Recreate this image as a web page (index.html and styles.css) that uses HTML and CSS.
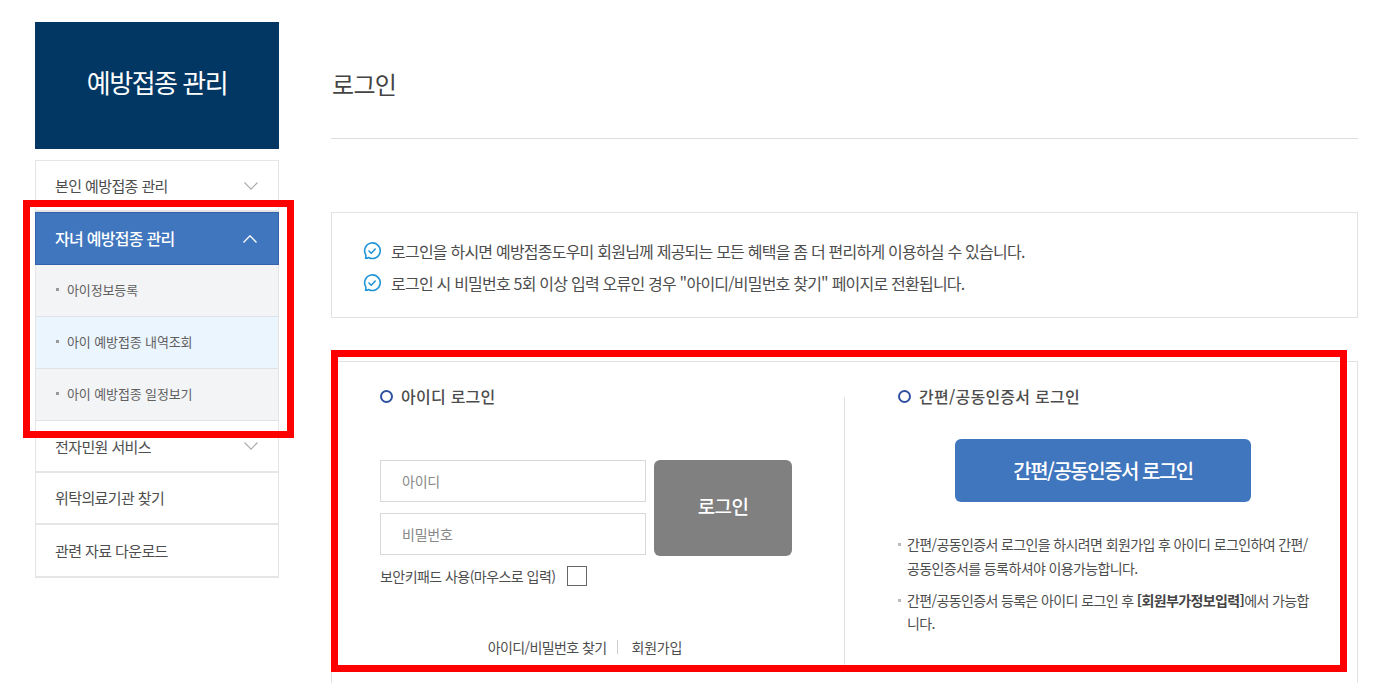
FILE: index.html
```html
<!DOCTYPE html>
<html lang="ko">
<head>
<meta charset="utf-8">
<title>로그인</title>
<link rel="stylesheet" href="styles.css">
</head>
<body>
<div class="page">
  <aside class="side">
    <div class="brand">예방접종 관리</div>
    <ul class="menu">
      <li class="item first"><span>본인 예방접종 관리</span><svg class="chev" viewBox="0 0 14 8"><path d="M.5.5 7 7.2 13.500.5"/></svg></li>
      <li class="item active"><span>자녀 예방접종 관리</span><svg class="chev" viewBox="0 0 14 8"><path d="M.5 7.500 7 .8l6.500 6.700"/></svg></li>
      <li class="sub"><i></i>아이정보등록</li>
      <li class="sub current"><i></i>아이 예방접종 내역조회</li>
      <li class="sub"><i></i>아이 예방접종 일정보기</li>
      <li class="item low"><span>전자민원 서비스</span><svg class="chev" viewBox="0 0 14 8"><path d="M.5.5 7 7.2 13.500.5"/></svg></li>
      <li class="item"><span>위탁의료기관 찾기</span></li>
      <li class="item last"><span>관련 자료 다운로드</span></li>
    </ul>
  </aside>
  <main class="main">
    <h1 class="title">로그인</h1>
    <div class="notice">
      <p><svg class="bubble" viewBox="0 0 18 18"><path d="M2.600 16.300c1.300.1 2.200-.2 3-.8A7.800 7.800 0 1 0 2.800 12.800c.2 1.300 0 2.500-.2 3.500Z"/><path d="m6 9 2.200 2.200L12.300 7"/></svg>로그인을 하시면 예방접종도우미 회원님께 제공되는 모든 혜택을 좀 더 편리하게 이용하실 수 있습니다.</p>
      <p><svg class="bubble" viewBox="0 0 18 18"><path d="M2.600 16.300c1.300.1 2.200-.2 3-.8A7.800 7.800 0 1 0 2.800 12.800c.2 1.300 0 2.500-.2 3.500Z"/><path d="m6 9 2.200 2.200L12.300 7"/></svg>로그인 시 비밀번호 5회 이상 입력 오류인 경우 "아이디/비밀번호 찾기" 페이지로 전환됩니다.</p>
    </div>
    <section class="login">
      <div class="col id">
        <h2 class="head"><i></i>아이디 로그인</h2>
        <div class="form">
          <div class="fields">
            <div class="input">아이디</div>
            <div class="input">비밀번호</div>
          </div>
          <button class="go" type="button">로그인</button>
        </div>
        <div class="keypad"><span>보안키패드 사용(마우스로 입력)</span><b class="check"></b></div>
        <div class="links"><span>아이디/비밀번호 찾기</span><i></i><span class="join">회원가입</span></div>
      </div>
      <div class="col cert">
        <h2 class="head"><i></i>간편/공동인증서 로그인</h2>
        <button class="certbtn" type="button">간편/공동인증서 로그인</button>
        <ul class="notes">
          <li>간편/공동인증서 로그인을 하시려면 회원가입 후 아이디 로그인하여 간편/공동인증서를 등록하셔야 이용가능합니다.</li>
          <li>간편/공동인증서 등록은 아이디 로그인 후 <b>[회원부가정보입력]</b>에서 가능합니다.</li>
        </ul>
      </div>
    </section>
  </main>
</div>
<div class="mark mark-menu"></div>
<div class="mark mark-login"></div>
</body>
</html>
```
FILE: styles.css
```css
* { box-sizing: border-box; margin: 0; padding: 0; }
html, body { height: 683px; overflow: hidden; background: #fff; }
body { font-family: "Noto Sans CJK KR", "Noto Sans", sans-serif; color: #4d4d4d; position: relative; }
ul { list-style: none; }
i { font-style: normal; }

.page { display: flex; padding: 22px 20px 0 35px; gap: 52px; }

.side { width: 244px; flex: none; }
.brand { height: 127px; background: #023764; color: #fff; font-size: 26px; letter-spacing: -1.5px; display: flex; align-items: center; justify-content: center; padding-bottom: 8px; }
.menu { margin-top: 11px; border: 1px solid #e5e5e5; border-bottom: 0; }
.item { height: 52px; display: flex; align-items: center; justify-content: space-between; padding: 0 20px 2px 19px; font-size: 15px; letter-spacing: -.6px; color: #4d4d4d; border-bottom: 2px solid #e5e5e5; }
.item.first { height: 51px; padding-bottom: 0; }
.item.low { padding-bottom: 0; }
.item.last { height: 53px; padding-bottom: 0; }
.item.active { height: 53px; margin: 0 -1px; padding: 0 21px 0 20px; background: #3f76bd; color: #fff; font-size: 16px; font-weight: 500; letter-spacing: -.72px; border: 1px solid #3563ab; }
.item.active span { margin: 0 0 2px -1px; }
.chev { width: 14px; height: 8px; fill: none; stroke: #aaa; stroke-width: 1.1; }
.active .chev { stroke: #fff; stroke-width: 1.3; }
.sub { height: 52px; display: flex; align-items: center; padding: 0 0 2px 20px; background: #f3f4f6; font-size: 13px; letter-spacing: -.12px; color: #5f5f5f; border-bottom: 1px solid #dfe3e8; }
.sub i { width: 3px; height: 3px; background: #999; margin-right: 8px; }
.sub.current { background: #ebf5fd; }

.main { flex: 1; min-width: 0; }
.title { height: 117px; padding-top: 44px; padding-left: 1px; font-size: 24px; line-height: 36px; font-weight: 400; letter-spacing: -.7px; color: #444; border-bottom: 1px solid #ddd; margin-bottom: 73px; }
.notice { height: 106px; border: 1px solid #e2e2e2; padding: 22px 32px 0; }
.notice p { height: 32px; display: flex; align-items: center; font-size: 16px; letter-spacing: -.78px; color: #4d4d4d; }
.bubble { width: 18px; height: 18px; margin: 0 10px 0 -1px; fill: none; stroke: #2296d6; stroke-width: 1.600; stroke-linejoin: round; stroke-linecap: round; }

.login { margin-top: 43px; height: 400px; border: 1px solid #e2e2e2; display: flex; }
.col { padding-top: 22px; position: relative; }
.col.id { width: 513px; padding-left: 48px; }
.col.id::after { content: ""; position: absolute; right: 0; top: 35px; height: 268px; width: 1px; background: #e2e2e2; }
.col.cert { flex: 1; padding-left: 53px; }
.head { height: 24px; display: flex; align-items: center; font-size: 16px; line-height: 24px; font-weight: 500; letter-spacing: .25px; color: #4d4d4d; }
.head i { width: 13px; height: 13px; border: 2.800px solid #2f519f; border-radius: 50%; margin-right: 8px; }

.form { display: flex; gap: 8px; margin-top: 52px; }
.fields { width: 266px; display: flex; flex-direction: column; gap: 11px; }
.input { height: 42px; border: 1px solid #d8d8d8; padding-left: 21px; display: flex; align-items: center; font-size: 14px; letter-spacing: -.2px; color: #888; }
.go { width: 138px; height: 96px; border: 0; border-radius: 6px; background: #808080; color: #fff; padding-bottom: 5px; font: 500 19px "Noto Sans CJK KR", sans-serif; letter-spacing: -.6px; }
.keypad { display: flex; align-items: center; margin-top: 9px; height: 22px; font-size: 14px; letter-spacing: -.55px; color: #4d4d4d; }
.check { width: 20px; height: 20px; border: 1px solid #666; margin-left: 12px; }
.links { display: flex; align-items: center; justify-content: center; margin-top: 49px; width: 410px; height: 22px; font-size: 14px; letter-spacing: -.6px; color: #4d4d4d; }
.links i { width: 1px; height: 14px; background: #ccc; margin: 0 14px 0 10px; }
.links .join { letter-spacing: -.2px; }

.certbtn { display: block; width: 296px; height: 63px; margin: 31px 0 0 57px; border: 0; border-radius: 6px; background: #3f76bd; color: #fff; font: 500 20px "Noto Sans CJK KR", sans-serif; letter-spacing: -1.500px; }
.notes { margin-top: 31px; width: 416px; font-size: 14px; line-height: 23.500px; letter-spacing: -.62px; color: #4d4d4d; }
.notes li { position: relative; padding-left: 9px; margin-bottom: 8.500px; }
.notes li::before { content: ""; position: absolute; left: 0; top: 10px; width: 3px; height: 3px; background: #bbb; }
.notes b { font-weight: 700; color: #444; }

.mark { position: absolute; border: 7px solid #f00; pointer-events: none; }
.mark-menu { left: 23px; top: 200px; width: 271px; height: 238px; }
.mark-login { left: 331px; top: 350px; width: 1016px; height: 322px; }
```
